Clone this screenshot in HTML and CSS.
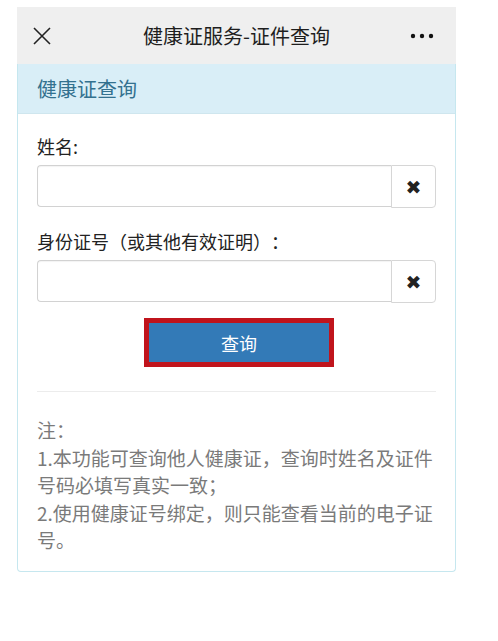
FILE: index.html
```html
<!DOCTYPE html>
<html lang="zh">
<head>
<meta charset="utf-8">
<title>健康证服务-证件查询</title>
<link rel="stylesheet" href="styles.css">
</head>
<body>
<div class="screen">
  <div class="navbar">
    <span class="nav-close">
      <svg width="18" height="18" viewBox="0 0 18 18"><path d="M1 1 L17 17 M17 1 L1 17" stroke="#222" stroke-width="1.6" fill="none"/></svg>
    </span>
    <span class="nav-title">健康证服务-证件查询</span>
    <span class="nav-more">
      <svg width="24" height="6" viewBox="0 0 24 6"><circle cx="3" cy="3" r="2.2" fill="#111"/><circle cx="12" cy="3" r="2.2" fill="#111"/><circle cx="21" cy="3" r="2.2" fill="#111"/></svg>
    </span>
  </div>
  <div class="panel">
    <div class="panel-heading">健康证查询</div>
    <div class="panel-body">
      <div class="field">
        <label class="field-label">姓名:</label>
        <div class="input-group">
          <input class="input" type="text">
          <span class="clear-btn">✖</span>
        </div>
      </div>
      <div class="field">
        <label class="field-label">身份证号（或其他有效证明）：</label>
        <div class="input-group">
          <input class="input" type="text">
          <span class="clear-btn">✖</span>
        </div>
      </div>
      <div class="actions">
        <button class="btn-query" type="button">查询</button>
      </div>
      <hr class="divider">
      <div class="notes">
        <p>注：</p>
        <p>1.本功能可查询他人健康证，查询时姓名及证件号码必填写真实一致；</p>
        <p>2.使用健康证号绑定，则只能查看当前的电子证号。</p>
      </div>
    </div>
  </div>
</div>
</body>
</html>
```

FILE: styles.css
```css
* { box-sizing: border-box; }
html, body { margin: 0; padding: 0; background: #fff; }
body {
  font-family: "Noto Sans CJK SC", "Noto Sans", sans-serif;
  color: #333;
  text-spacing-trim: space-all;
}
.screen {
  margin: 7px 0 0 17px;
  width: 439px;
}
.navbar {
  height: 57px;
  background: #efefef;
  display: flex;
  align-items: center;
  justify-content: space-between;
  padding: 0 22px 0 16px;
}
.nav-close { display: flex; width: 18px; height: 18px; }
.nav-title {
  font-size: 20px;
  color: #1e1e1e;
  margin-left: 12px;
}
.nav-more { display: flex; }
.panel {
  border: 1px solid #c6e7ef;
  border-top: none;
  border-radius: 0 0 4px 4px;
  background: #fff;
}
.panel-heading {
  height: 50px;
  background: #d9eef7;
  color: #33718f;
  font-size: 20px;
  display: flex;
  align-items: center;
  padding-left: 19px;
  border-bottom: 1px solid #cfe6ee;
}
.panel-body {
  padding: 19px 19px 17px 19px;
}
.field { margin-bottom: 20px; }
.field-label {
  display: block;
  font-size: 18px;
  line-height: 26px;
  color: #222;
  margin-bottom: 6px;
}
.input-group {
  display: flex;
  height: 43px;
}
.input {
  flex: 1;
  min-width: 0;
  height: 42px;
  border: 1px solid #d2d2d2;
  border-right: none;
  border-radius: 4px 0 0 4px;
  box-shadow: inset 0 1px 1px rgba(0,0,0,0.05);
  background: #fff;
  font-size: 16px;
  padding: 0 10px;
  outline: none;
}
.clear-btn {
  width: 45px;
  height: 43px;
  border: 1px solid #d6d6d6;
  border-radius: 0 4px 4px 0;
  background: #fff;
  display: flex;
  align-items: center;
  justify-content: center;
  font-size: 19px;
  color: #222;
  font-family: "DejaVu Sans", sans-serif;
}
.actions {
  display: flex;
  justify-content: center;
  margin-top: -5px;
}
.btn-query {
  width: 190px;
  height: 49px;
  background: #337ab7;
  border: 5px solid #c0141c;
  color: #fff;
  font-size: 18px;
  font-family: "Noto Sans CJK SC", sans-serif;
  padding: 0;
  margin-left: 5px;
}
.divider {
  border: none;
  border-top: 1px solid #ececec;
  margin: 24px 0 24px 0;
}
.notes {
  font-size: 19px;
  line-height: 27.5px;
  color: #7a7a7a;
}
.notes p { margin: 0; }
```
